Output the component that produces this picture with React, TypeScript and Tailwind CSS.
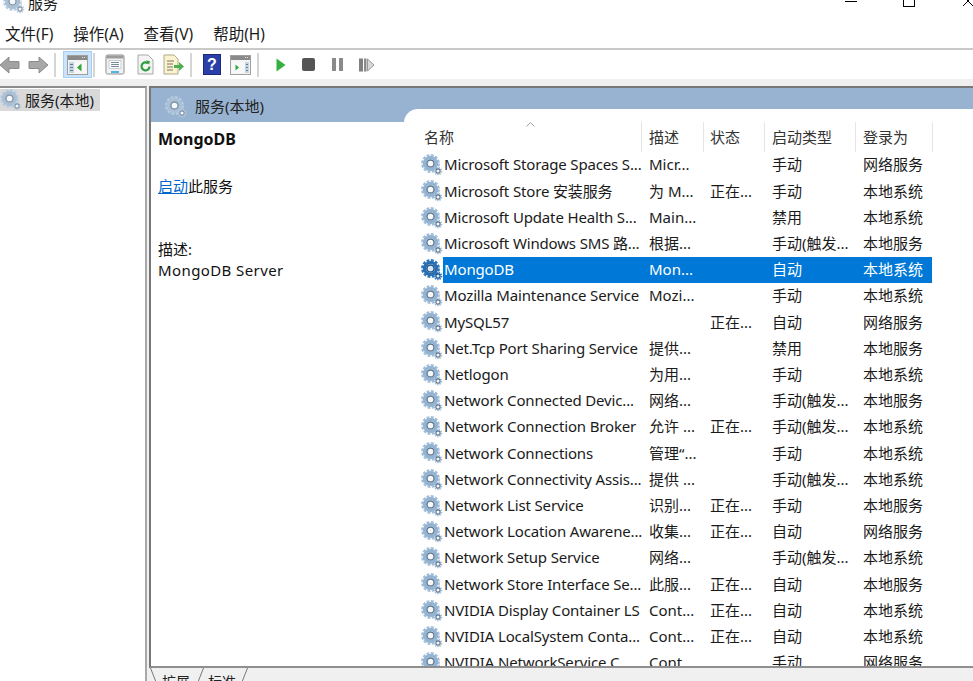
const rows: [string, string, string, string, string][] = [
  ["Microsoft Storage Spaces S...", "Micr...", "", "手动", "网络服务"],
  ["Microsoft Store 安装服务", "为 M...", "正在...", "手动", "本地系统"],
  ["Microsoft Update Health S...", "Main...", "", "禁用", "本地系统"],
  ["Microsoft Windows SMS 路...", "根据...", "", "手动(触发...", "本地服务"],
  ["MongoDB", "Mon...", "", "自动", "本地系统"],
  ["Mozilla Maintenance Service", "Mozi...", "", "手动", "本地系统"],
  ["MySQL57", "", "正在...", "自动", "网络服务"],
  ["Net.Tcp Port Sharing Service", "提供...", "", "禁用", "本地服务"],
  ["Netlogon", "为用...", "", "手动", "本地系统"],
  ["Network Connected Devic...", "网络...", "", "手动(触发...", "本地服务"],
  ["Network Connection Broker", "允许 ...", "正在...", "手动(触发...", "本地系统"],
  ["Network Connections", "管理“...", "", "手动", "本地系统"],
  ["Network Connectivity Assis...", "提供 ...", "", "手动(触发...", "本地系统"],
  ["Network List Service", "识别...", "正在...", "手动", "本地服务"],
  ["Network Location Awarene...", "收集...", "正在...", "自动", "网络服务"],
  ["Network Setup Service", "网络...", "", "手动(触发...", "本地系统"],
  ["Network Store Interface Se...", "此服...", "正在...", "自动", "本地服务"],
  ["NVIDIA Display Container LS", "Cont...", "正在...", "自动", "本地系统"],
  ["NVIDIA LocalSystem Conta...", "Cont...", "正在...", "自动", "本地系统"],
  ["NVIDIA NetworkService C...", "Cont...", "", "手动", "网络服务"],
];

function Gear({ size = 22, selected = false, pale = false }: { size?: number; selected?: boolean; pale?: boolean }) {
  const teeth = selected ? "#2e78c0" : pale ? "#b9cde0" : "#a3bfda";
  const body = selected ? "#2a6cb0" : pale ? "#a9c0d6" : "#93b3d2";
  const ring = selected ? "#174f8a" : pale ? "#8195a8" : "#5e7690";
  const centre = selected ? "#d8e8f6" : "#f4f8fb";
  return (
    <svg width={size} height={size} viewBox="0 0 22 22" className="shrink-0">
      <circle cx="9.5" cy="9.5" r="8" fill="none" stroke={teeth} strokeWidth="2.8" strokeDasharray="2.8 1.4" />
      <circle cx="9.5" cy="9.5" r="6" fill="none" stroke={body} strokeWidth="3.2" />
      <circle cx="9.5" cy="9.5" r="3.6" fill={centre} stroke={ring} strokeWidth="1.5" />
      <circle cx="17" cy="17" r="3.4" fill="none" stroke={teeth} strokeWidth="1.8" strokeDasharray="1.4 0.9" />
      <circle cx="17" cy="17" r="2.1" fill={centre} stroke={ring} strokeWidth="1.1" />
    </svg>
  );
}

function Sep() {
  return <div className="w-[2px] h-[24px] bg-[#d5d5d5] shrink-0" />;
}

function WindowIcon({ mirrored = false }: { mirrored?: boolean }) {
  return (
    <svg width="21" height="20" viewBox="0 0 21 20" className="shrink-0">
      <rect x="0.5" y="0.5" width="20" height="19" fill="#f4f4f4" stroke="#a0a0a0" />
      <rect x="1" y="1" width="19" height="4" fill="#8a8a8a" />
      <path d="M15 2.5h1M17 2.5h1" stroke="#e8e8e8" />
      {mirrored ? (
        <>
          <rect x="2" y="7" width="12" height="11" fill="#f8f8f8" />
          <rect x="15" y="7" width="4" height="11" fill="#c7d5e3" />
          <path d="M16 9.5h2M16 12.5h2M16 15.5h2" stroke="#5f7d9c" />
          <path d="M5.5 9.5l3.5 3-3.5 3z" fill="#2fa83a" />
        </>
      ) : (
        <>
          <rect x="2" y="7" width="5" height="11" fill="#c7d5e3" />
          <path d="M3 9.5h3M3 12.5h3M3 15.5h3" stroke="#5f7d9c" />
          <rect x="8" y="7" width="11" height="11" fill="#f8f8f8" />
          <path d="M14.5 8.5l-4.5 4 4.5 4z" fill="#2fa83a" />
        </>
      )}
    </svg>
  );
}

function Toolbar() {
  return (
    <div className="h-[29px] flex items-center bg-white">
      <svg width="48" height="20" viewBox="0 0 48 20" className="shrink-0">
        <path d="M0 10l9-8v4.5h10v7H9V18z" fill="#a2a2a2" stroke="#8c8c8c" />
        <path d="M48 10l-9-8v4.5H29v7h10V18z" fill="#a8a8a8" stroke="#8c8c8c" />
      </svg>
      <div className="w-[6px]" />
      <Sep />
      <div className="w-[7px]" />
      <div className="w-[29px] h-[27px] bg-[#cce4fb] border border-[#a5d0f5] flex items-center justify-center shrink-0">
        <WindowIcon />
      </div>
      <div className="w-[1px]" />
      <Sep />
      <div className="w-[10px]" />
      <svg width="20" height="21" viewBox="0 0 20 21" className="shrink-0">
        <rect x="1" y="1" width="18" height="19" rx="1.5" fill="#f2f2f2" stroke="#8f8f8f" />
        <rect x="1.5" y="1.5" width="17" height="3" fill="#9c9c9c" />
        <rect x="4" y="6.5" width="12" height="8" fill="#fff" stroke="#a5b2bf" strokeWidth="0.6" />
        <path d="M6 8.5h8M6 10.5h8M6 12.5h8" stroke="#7a8a9a" />
        <rect x="6" y="17" width="8" height="2" fill="#4fb4e8" />
      </svg>
      <div className="w-[12px]" />
      <svg width="17" height="21" viewBox="0 0 17 21" className="shrink-0">
        <path d="M1 1h10l5 5v14H1z" fill="#f4f4f4" stroke="#a8a8a8" />
        <path d="M12.5 12.5a4 4 0 1 1-1.4-3.2" fill="none" stroke="#2f9e3e" strokeWidth="2.2" />
        <path d="M9 6.5l3.8 0.5-0.5 3.8z" fill="#2f9e3e" />
      </svg>
      <div className="w-[9px]" />
      <svg width="21" height="21" viewBox="0 0 21 21" className="shrink-0">
        <path d="M1 1h10l4 4v15H1z" fill="#fbf3cf" stroke="#b0a888" />
        <path d="M4 7h7M4 10h6M4 13h6M4 16h6" stroke="#77746a" />
        <path d="M11 11h5V8l5 4.5-5 4.5v-3h-5z" fill="#4cb050" />
      </svg>
      <div className="w-[6px]" />
      <Sep />
      <div className="w-[11px]" />
      <div className="w-[18px] h-[21px] bg-[#2b3fa8] border border-[#1a2a78] flex items-center justify-center text-white text-[16px] font-bold font-['Liberation_Sans',sans-serif] shrink-0">?</div>
      <div className="w-[9px]" />
      <WindowIcon mirrored />
      <div className="w-[6px]" />
      <Sep />
      <div className="w-[17px]" />
      <svg width="10" height="14" viewBox="0 0 10 14" className="shrink-0"><path d="M0.5 0.5L9.5 7 0.5 13.5z" fill="#35b03f" /></svg>
      <div className="w-[16px]" />
      <div className="w-[13px] h-[13px] rounded-[2px] bg-[#555555] shrink-0" />
      <div className="w-[17px]" />
      <div className="flex gap-[3px] shrink-0">
        <div className="w-[4px] h-[13px] bg-[#8a8a8a]" />
        <div className="w-[4px] h-[13px] bg-[#8a8a8a]" />
      </div>
      <div className="w-[16px]" />
      <svg width="16" height="14" viewBox="0 0 16 14" className="shrink-0">
        <rect x="0" y="0.5" width="4" height="13" fill="#808080" />
        <rect x="5" y="0.5" width="2.5" height="13" fill="#8a8a8a" />
        <path d="M8.5 1L15 7l-6.5 6z" fill="#d8d8d8" stroke="#9a9a9a" />
      </svg>
    </div>
  );
}

function HeaderCell({ w, label, pl }: { w: string; label: string; pl: string }) {
  return (
    <div className={`${w} ${pl} h-[30px] flex items-center border-r border-[#e5e5e5] shrink-0 text-[#333]`}>{label}</div>
  );
}

function Slash({ back = false }: { back?: boolean }) {
  return (
    <svg width="7" height="14" viewBox="0 0 7 14" className="shrink-0">
      <path d={back ? "M0.5 0L6 14" : "M6.5 0L1 14"} stroke="#777" fill="none" />
    </svg>
  );
}

export default function App() {
  return (
    <div className="w-[973px] h-[681px] overflow-hidden bg-white text-[15px] text-[#1a1a1a] flex flex-col font-['Noto_Sans','Noto_Sans_CJK_SC',sans-serif]">
      <div className="h-[21px] flex items-start justify-between shrink-0">
        <div className="flex items-center pl-[3px] gap-[3px] -mt-[8px]">
          <Gear size={22} pale />
          <span className="text-[15px]">服务</span>
        </div>
        <div className="flex items-start text-black">
          <div className="w-[12px] h-[1px] bg-black mr-[46px] mt-[1px]" />
          <div className="w-[12px] h-[12px] border border-black mr-[47px] -mt-[5px]" />
          <svg width="12" height="12" viewBox="0 0 12 12" className="mr-[-1px] -mt-[5px]"><path d="M1 1l10 10M11 1L1 11" stroke="#000" /></svg>
        </div>
      </div>
      <div className="h-[29px] shrink-0 flex items-center pl-[5px] gap-[20px] border-b-2 border-[#c9c9c9] leading-none text-[15.5px]">
        <span>文件(F)</span>
        <span>操作(A)</span>
        <span>查看(V)</span>
        <span>帮助(H)</span>
      </div>
      <Toolbar />
      <div className="h-[7px] bg-[#efefef] shrink-0" />
      <div className="flex-1 min-h-0 flex bg-[#f0f0f0] pt-0">
        <div className="w-[147px] shrink-0 bg-white border-t-2 border-r-2 border-t-[#8c8c8c] border-r-[#a8a8a8] pt-[1px]">
          <div className="w-[100px] h-[22px] bg-[#d9d9d9] flex items-center gap-[3px] whitespace-nowrap">
            <Gear size={22} pale />
            <span>服务(本地)</span>
          </div>
        </div>
        <div className="w-[2px] shrink-0 bg-[#f0f0f0]" />
        <div className="flex-1 min-w-0 flex flex-col">
          <div className="flex-1 min-h-0 flex flex-col border-t-2 border-l-2 border-b-2 border-[#777777] border-b-[#8f8f8f] bg-white">
            <div className="h-[34px] shrink-0 bg-[#98b3d1] flex items-center pl-[14px] pt-[3px] gap-[8px] text-[#222]">
              <Gear size={22} pale />
              <span>服务(本地)</span>
            </div>
            <div className="flex-1 min-h-0 flex">
              <div className="w-[253px] shrink-0 pl-[7px] pt-[6px] text-[#111]">
                <div className="font-bold h-[22px] leading-[22px] text-[16px]">MongoDB</div>
                <div className="mt-[25px] h-[22px] leading-[22px]">
                  <span className="text-[#0066cc] underline">启动</span>此服务
                </div>
                <div className="mt-[41px] h-[21px] leading-[22px]">描述:</div>
                <div className="h-[22px] leading-[22px] tracking-[0.4px]">MongoDB Server</div>
              </div>
              <div className="flex-1 min-w-0 -mt-[13px] bg-white rounded-tl-[14px] pl-[17px] overflow-hidden relative">
                <div className="h-[13px]" />
                <svg width="9" height="5" viewBox="0 0 9 5" className="absolute left-[122px] top-[13px]"><path d="M0.5 4.5L4.5 0.5l4 4" fill="none" stroke="#a0a0a0" /></svg>
                <div className="flex h-[30px] whitespace-nowrap">
                  <HeaderCell w="w-[221px]" pl="pl-[3px]" label="名称" />
                  <HeaderCell w="w-[62px]" pl="pl-[7px]" label="描述" />
                  <HeaderCell w="w-[61px]" pl="pl-[6px]" label="状态" />
                  <HeaderCell w="w-[91px]" pl="pl-[7px]" label="启动类型" />
                  <HeaderCell w="w-[77px]" pl="pl-[7px]" label="登录为" />
                </div>
                <div className="whitespace-nowrap">
                  {rows.map((r) => {
                    const sel = r[0] === "MongoDB";
                    return (
                      <div key={r[0]} className="flex h-[26.21px] items-center">
                        <Gear size={22} selected={sel} />
                        <div className={`flex h-full items-center pb-[1px] ${sel ? "bg-[#0078d7] text-white" : ""}`}>
                          <div className="w-[199px] pl-[1px] overflow-hidden tracking-[-0.15px]">{r[0]}</div>
                          <div className="w-[62px] pl-[7px] overflow-hidden">{r[1]}</div>
                          <div className="w-[61px] pl-[6px] overflow-hidden">{r[2]}</div>
                          <div className="w-[91px] pl-[7px] overflow-hidden">{r[3]}</div>
                          <div className="w-[76px] pl-[7px] overflow-hidden">{r[4]}</div>
                        </div>
                      </div>
                    );
                  })}
                </div>
              </div>
            </div>
          </div>
          <div className="h-[13px] shrink-0 flex items-start pl-[1px] text-[14px] leading-[18px] text-[#222]">
            <Slash back />
            <span className="ml-[5px] -mt-[1px] pt-[6px]">扩展</span>
            <span className="ml-[7px]"><Slash /></span>
            <span className="ml-[4px] -mt-[1px] pt-[6px]">标准</span>
            <span className="ml-[5px]"><Slash /></span>
          </div>
        </div>
      </div>
    </div>
  );
}
